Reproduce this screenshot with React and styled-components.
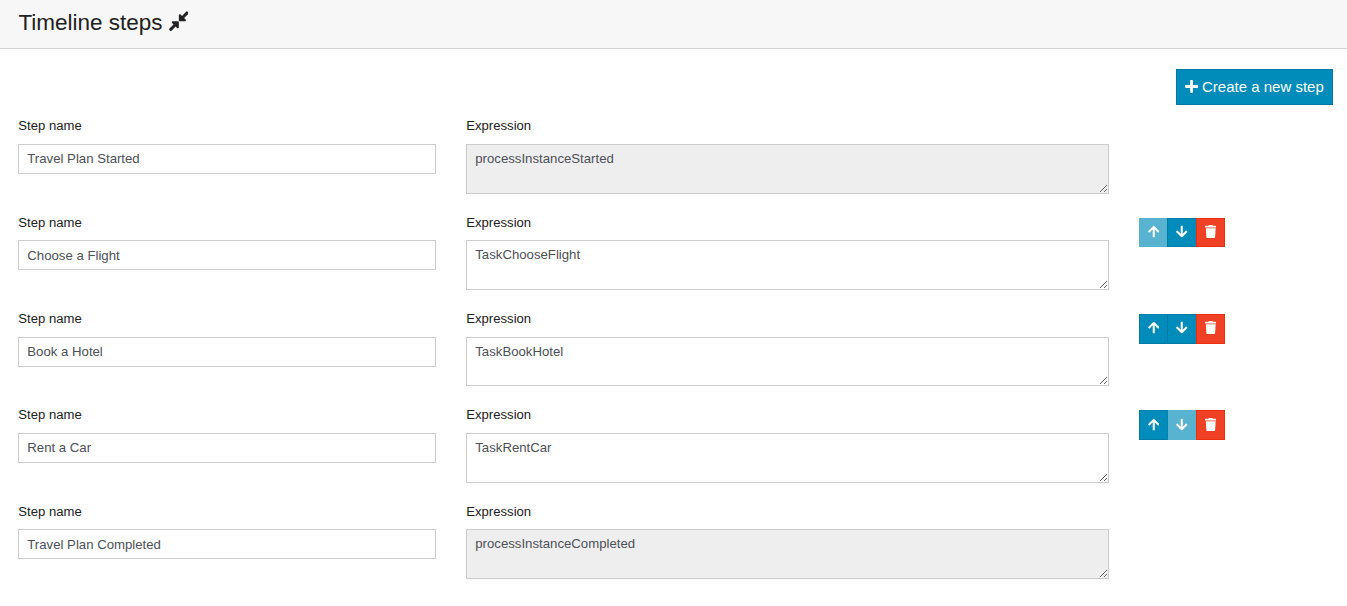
import React from 'react';
import styled, { createGlobalStyle } from 'styled-components';
import { FaPlus, FaCompressAlt, FaArrowUp, FaArrowDown, FaTrash } from 'react-icons/fa';

const GlobalStyle = createGlobalStyle`
  *, *::before, *::after { box-sizing: border-box; }
  body {
    margin: 0;
    background: #fff;
    color: #222;
    font-family: "Liberation Sans", Arial, sans-serif;
    font-size: 13.125px;
    overflow: hidden;
  }
`;

const Header = styled.header`
  display: flex;
  align-items: center;
  height: 49px;
  padding: 0 18.4px 2px;
  background: #f7f7f7;
  border-bottom: 1px solid #d5d5d5;
`;

const Title = styled.h1`
  margin: 0 6px 0 0;
  font-size: 22.5px;
  font-weight: 400;
  line-height: 30px;
`;

const CollapseIcon = styled(FaCompressAlt)`
  width: 19.7px;
  height: 22.5px;
  margin-bottom: 3px;
`;

const Toolbar = styled.div`
  display: flex;
  justify-content: flex-end;
  padding: 20px 14px 0 0;
`;

const CreateButton = styled.button`
  display: flex;
  align-items: center;
  justify-content: center;
  gap: 4.2px;
  width: 157px;
  height: 36px;
  padding: 0 0.5px 2px 0;
  border: 1px solid #007ba7;
  background: #008cba;
  color: #fff;
  font: 15px "Liberation Sans", Arial, sans-serif;
  white-space: nowrap;
`;

const PlusIcon = styled(FaPlus)`
  width: 13.1px;
  height: 15px;
`;

const StepList = styled.main`
  padding: 12px 14px 0 18.3px;
`;

const StepRow = styled.section`
  display: grid;
  grid-template-columns: 417.6px 642.4px 86px;
  column-gap: 30.4px;
  align-items: start;
  height: 96.33px;
`;

const Field = styled.label`
  display: flex;
  flex-direction: column;
`;

const Label = styled.span`
  height: 27.1px;
  padding-top: 0.3px;
  line-height: 18px;
`;

const NameInput = styled.input`
  height: 29.9px;
  padding: 0 8px 0.5px;
  border: 1px solid #ccc;
  border-radius: 0;
  outline: none;
  background: #fff;
  color: #4d5057;
  font: 13.2px "Liberation Sans", Arial, sans-serif;
`;

const ExpressionInput = styled.textarea`
  height: 49.6px;
  padding: 4px 8px;
  border: 1px solid #ccc;
  border-radius: 0;
  outline: none;
  overflow: auto;
  background: ${(p) => (p.$locked ? '#eee' : '#fff')};
  color: #4d5057;
  font: 13.2px/19.5px "Liberation Sans", Arial, sans-serif;
`;

const Actions = styled.div`
  display: flex;
  padding-top: 4.4px;
`;

const ActionButton = styled.button`
  position: relative;
  display: flex;
  align-items: center;
  justify-content: center;
  width: 29.4px;
  height: 29.6px;
  padding: 0 0 2px ${(p) => (p.$danger ? '0.6px' : '0')};
  border: 1px solid ${(p) => (p.$danger ? '#ea2f10' : '#007ba7')};
  background: ${(p) => (p.$danger ? '#f04124' : '#008cba')};
  ${(p) => p.disabled && 'border-color: #008cba; opacity: 0.65;'}
  color: #fff;

  & + & { margin-left: -1px; }

  svg {
    width: 11.5px;
    height: 13.125px;
  }
`;

const steps = [
  { name: 'Travel Plan Started', expression: 'processInstanceStarted', locked: true },
  { name: 'Choose a Flight', expression: 'TaskChooseFlight', first: true },
  { name: 'Book a Hotel', expression: 'TaskBookHotel' },
  { name: 'Rent a Car', expression: 'TaskRentCar', last: true },
  { name: 'Travel Plan Completed', expression: 'processInstanceCompleted', locked: true },
];

function Step({ name, expression, locked, first, last }) {
  return (
    <StepRow>
      <Field>
        <Label>Step name</Label>
        <NameInput defaultValue={name} />
      </Field>
      <Field>
        <Label>Expression</Label>
        <ExpressionInput defaultValue={expression} readOnly={locked} $locked={locked} spellCheck={false} />
      </Field>
      {!locked && (
        <Actions>
          <ActionButton disabled={first} aria-label="Move up"><FaArrowUp /></ActionButton>
          <ActionButton disabled={last} aria-label="Move down"><FaArrowDown /></ActionButton>
          <ActionButton $danger aria-label="Delete"><FaTrash /></ActionButton>
        </Actions>
      )}
    </StepRow>
  );
}

export default function App() {
  return (
    <>
      <GlobalStyle />
      <Header>
        <Title>Timeline steps</Title>
        <CollapseIcon />
      </Header>
      <Toolbar>
        <CreateButton><PlusIcon />Create a new step</CreateButton>
      </Toolbar>
      <StepList>
        {steps.map((step) => <Step key={step.name} {...step} />)}
      </StepList>
    </>
  );
}
